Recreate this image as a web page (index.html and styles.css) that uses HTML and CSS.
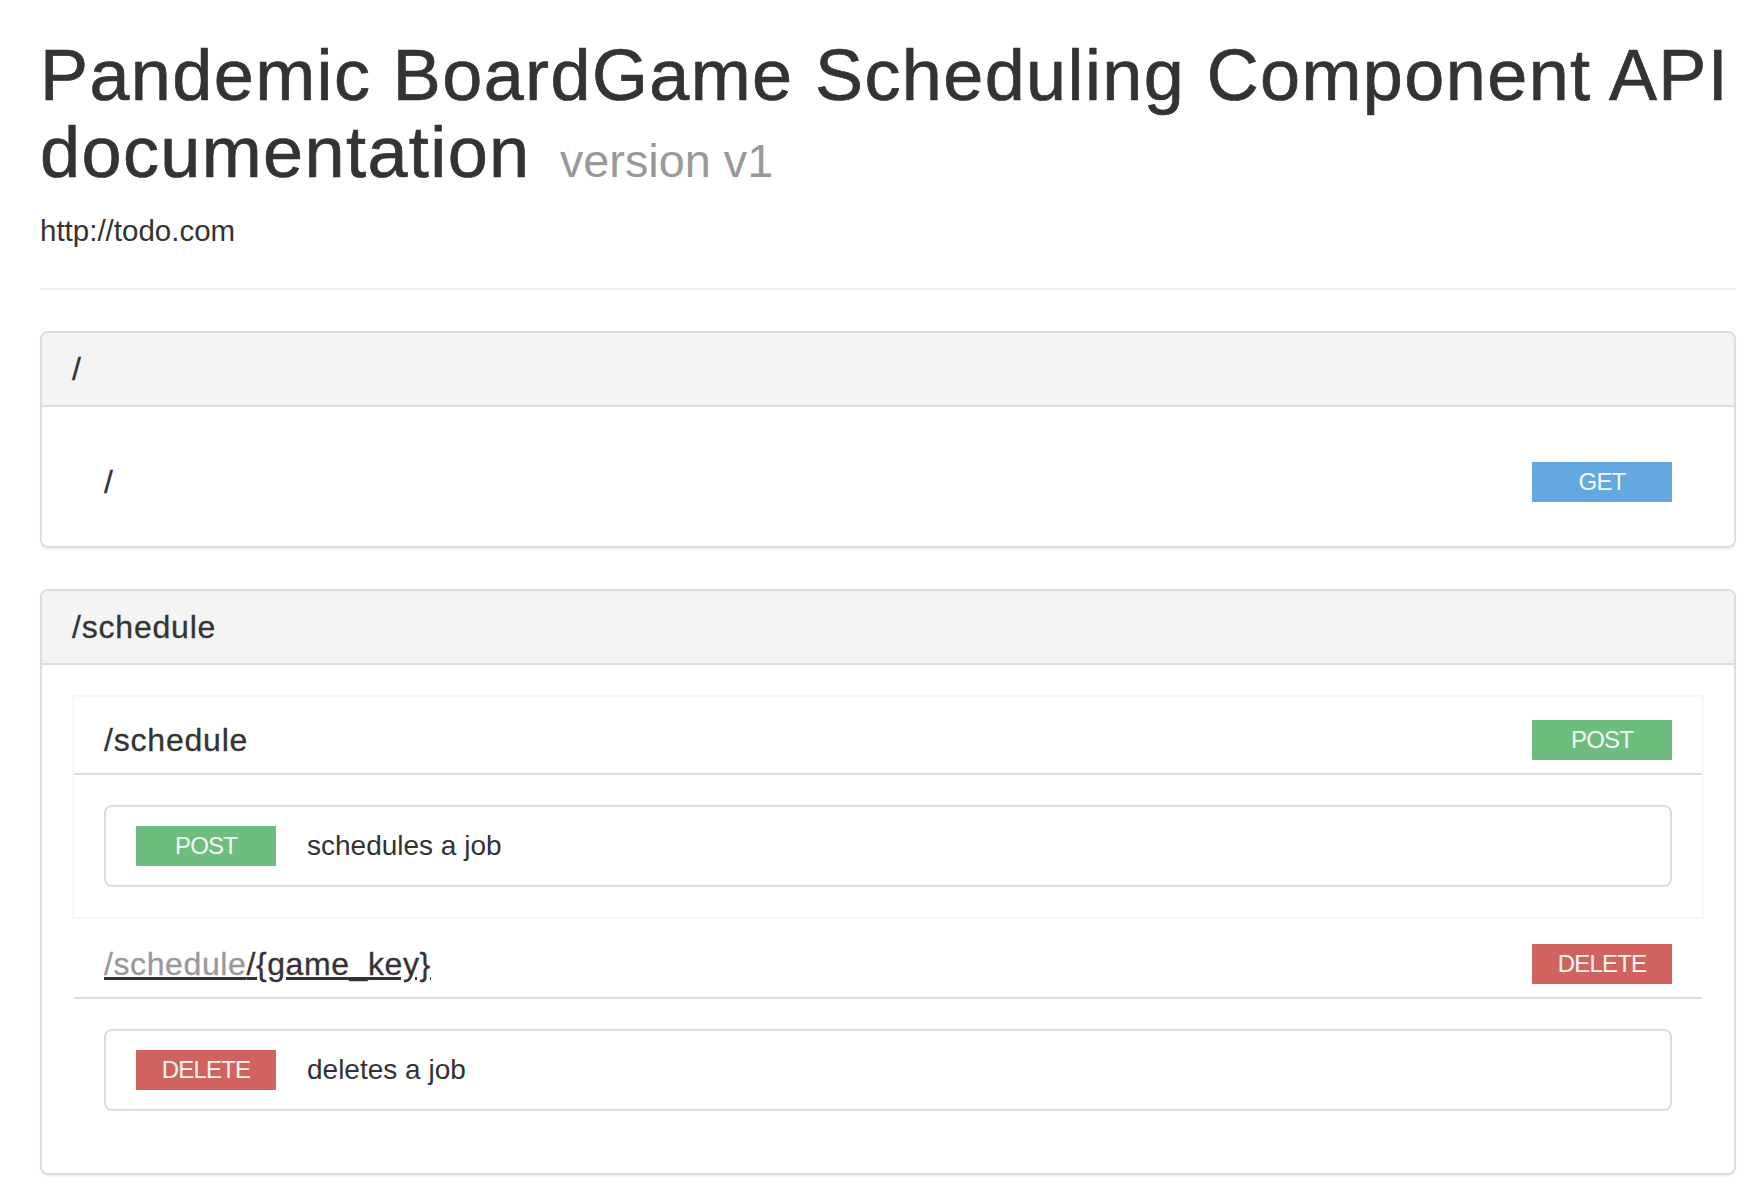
FILE: index.html
```html
<!DOCTYPE html>
<html lang="en">
<head>
<meta charset="utf-8">
<title>Pandemic BoardGame Scheduling Component API documentation</title>
<link rel="stylesheet" href="styles.css">
</head>
<body>
<div class="container">
  <h1 class="title">Pandemic BoardGame Scheduling Component API documentation <small class="version">version v1</small></h1>
  <p class="base-url">http://todo.com</p>
  <hr class="divider">

  <div class="panel">
    <div class="panel-heading"><h3 class="panel-title">/</h3></div>
    <div class="panel-body">
      <div class="resource">
        <div class="resource-head no-line">
          <h4 class="resource-path">/</h4>
          <span class="method method-get">GET</span>
        </div>
      </div>
    </div>
  </div>

  <div class="panel">
    <div class="panel-heading"><h3 class="panel-title">/schedule</h3></div>
    <div class="panel-body">
      <div class="resource resource-active">
        <div class="resource-head">
          <h4 class="resource-path">/schedule</h4>
          <span class="method method-post">POST</span>
        </div>
        <div class="operation">
          <span class="method method-post">POST</span>
          <span class="operation-desc">schedules a job</span>
        </div>
      </div>
      <div class="resource">
        <div class="resource-head">
          <h4 class="resource-path"><a class="path-link" href="#"><span class="path-parent">/schedule</span>/{game_key}</a></h4>
          <span class="method method-delete">DELETE</span>
        </div>
        <div class="operation">
          <span class="method method-delete">DELETE</span>
          <span class="operation-desc">deletes a job</span>
        </div>
      </div>
    </div>
  </div>
</div>
</body>
</html>
```

FILE: styles.css
```css
html, body {
  margin: 0;
  padding: 0;
  background: #ffffff;
}

body {
  font-family: "Liberation Sans", Arial, Helvetica, sans-serif;
  font-size: 28px;
  line-height: 40px;
  color: #333333;
}

.container {
  padding: 0 24px 0 40px;
}

.title {
  margin: 37px 0 20px;
  font-size: 72px;
  line-height: 77px;
  font-weight: 500;
  letter-spacing: 1.4px;
  -webkit-text-stroke: 0.7px #333333;
  color: #333333;
}

.version {
  margin-left: 8px;
  font-size: 46.8px;
  line-height: 1;
  font-weight: 400;
  letter-spacing: 0;
  -webkit-text-stroke: 0;
  color: #999999;
}

.base-url {
  margin: 0;
  font-size: 29.5px;
  line-height: 40px;
}

.divider {
  margin: 37px 0 41px;
  border: 0;
  border-top: 2px solid #eeeeee;
  height: 0;
}

.panel {
  margin-bottom: 41px;
  border: 2px solid #dddddd;
  border-radius: 8px;
  background: #ffffff;
  box-shadow: 0 2px 2px rgba(0, 0, 0, 0.05);
}

.panel-heading {
  padding: 20px 30px;
  background: #f4f4f4;
  border-bottom: 2px solid #dddddd;
  border-radius: 6px 6px 0 0;
}

.panel-title {
  margin: 0;
  font-size: 32px;
  line-height: 32px;
  font-weight: 500;
  letter-spacing: 0.8px;
  -webkit-text-stroke: 0.3px #333333;
  color: #333333;
}

.panel-body {
  padding: 30px;
}

.resource {
  border: 2px solid transparent;
}

.resource-active {
  border-color: #f7f7f7;
}

.resource-head {
  display: flex;
  align-items: center;
  justify-content: space-between;
  padding: 23px 30px 13px;
  border-bottom: 2px solid #dddddd;
}

.resource-head.no-line {
  padding-bottom: 12px;
  border-bottom: 0;
}

.resource-path {
  margin: 0;
  font-size: 32px;
  line-height: 40px;
  font-weight: 500;
  letter-spacing: 0.8px;
  -webkit-text-stroke: 0.3px currentColor;
  color: #333333;
}

.path-link {
  color: #333333;
  text-decoration: underline;
  letter-spacing: 0.6px;
}

.path-parent {
  color: #999999;
}

.method {
  display: inline-block;
  width: 140px;
  height: 40px;
  line-height: 40px;
  text-align: center;
  font-size: 24px;
  letter-spacing: -0.8px;
  color: #f7f7f7;
}

.method-get {
  background: #64a8e2;
}

.method-post {
  background: #6cbd7e;
}

.method-delete {
  background: #d1635f;
}

.operation {
  display: flex;
  align-items: center;
  gap: 31px;
  margin: 30px;
  padding: 19px 30px;
  border: 2px solid #dddddd;
  border-radius: 8px;
}

.operation-desc {
  font-size: 28px;
  line-height: 40px;
  color: #333333;
}
```
